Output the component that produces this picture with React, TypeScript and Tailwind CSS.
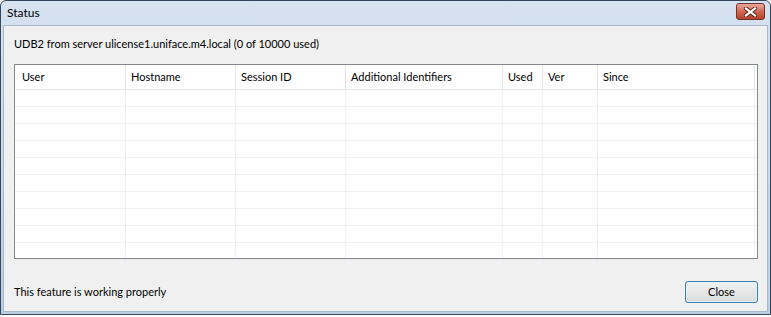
const columns = ["User", "Hostname", "Session ID", "Additional Identifiers", "Used", "Ver", "Since"];
const rows = Array.from({ length: 10 });

function CloseGlyph() {
  return (
    <svg width="13" height="10" viewBox="0 0 13 10">
      <path d="M2 1.5 L11 8.5 M11 1.5 L2 8.5" stroke="#5a2018" strokeWidth="4" strokeLinecap="square" />
      <path d="M2 1.5 L11 8.5 M11 1.5 L2 8.5" stroke="#ffffff" strokeWidth="2.2" strokeLinecap="square" />
    </svg>
  );
}

export default function App() {
  return (
    <div
      className="w-[771px] h-[317px] overflow-hidden bg-white"
      style={{ fontFamily: 'Lato, "Noto Sans", sans-serif' }}
    >
      <div className="w-[771px] h-[315px] flex flex-col border border-[#34475c] rounded-t-[6px] bg-gradient-to-b from-[#d6e2f0] to-[#bccfe4]">
        {/* title bar */}
        <div className="h-[24px] flex items-center justify-between pl-[6px] pr-[5px]">
          <span className="text-[12px] text-black">Status</span>
          <button className="w-[29px] h-[17px] mt-[-3px] flex items-center justify-center rounded-[3px] border border-[#6e3328] bg-gradient-to-b from-[#e9a99b] via-[#d06a55] to-[#b8402b]">
            <CloseGlyph />
          </button>
        </div>

        {/* body */}
        <div className="flex-1 mx-[2px] mb-[2px] border border-[#a9b8c9] bg-[#f0f0f0] pl-[10px] pr-[9px] flex flex-col text-[11px] text-black">
          <div className="mt-[10px] h-[16px] leading-[16px]">
            UDB2 from server ulicense1.uniface.m4.local (0 of 10000 used)
          </div>

          <div className="mt-[12px] h-[195px] border border-[#828790] bg-white overflow-hidden">
            <div className="grid grid-cols-[111px_110px_110px_157px_40px_55px_157px] h-[25px] border-b border-[#e5e5e5]">
              {columns.map((c, i) => (
                <div
                  key={c}
                  className={
                    "flex items-center pt-[1px] border-r border-[#e5e5e5] " +
                    (i === 0 ? "pl-[7px]" : "pl-[5px]")
                  }
                >
                  {c}
                </div>
              ))}
            </div>
            {rows.map((_, r) => (
              <div
                key={r}
                className="grid grid-cols-[111px_110px_110px_157px_40px_55px_157px] h-[17px] border-b border-[#f0f0f0]"
              >
                {columns.map((c) => (
                  <div key={c} className="border-r border-[#f0f0f0]" />
                ))}
              </div>
            ))}
          </div>

          <div className="mt-[22px] flex items-center justify-between">
            <span>This feature is working properly</span>
            <button className="w-[73px] h-[22px] rounded-[3px] border border-[#3c7fb1] bg-gradient-to-b from-[#f2f2f2] to-[#dcdcdc] shadow-[inset_0_0_0_1px_#e3f1fb]">
              Close
            </button>
          </div>
        </div>
      </div>
    </div>
  );
}
